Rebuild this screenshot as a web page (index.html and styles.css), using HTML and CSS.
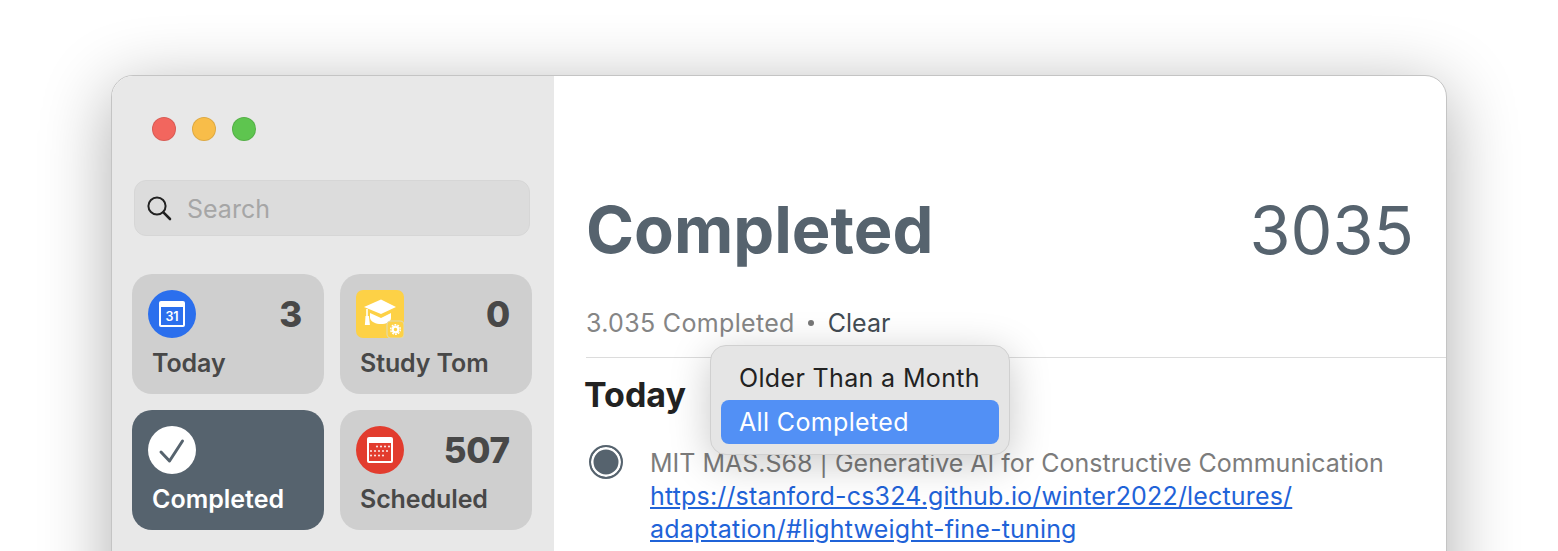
FILE: index.html
```html
<!DOCTYPE html>
<html lang="en">
<head>
<meta charset="utf-8">
<title>Reminders</title>
<link rel="stylesheet" href="styles.css">
</head>
<body>
<div class="window">
  <aside class="sidebar">
    <div class="lights">
      <span class="light red"></span><span class="light yellow"></span><span class="light green"></span>
    </div>
    <div class="search">
      <svg class="search-icon" viewBox="0 0 26 26" width="26" height="26"><circle cx="11" cy="11" r="8.6" fill="none" stroke="#222" stroke-width="2"/><path d="M17.4 17.4 L24 24" stroke="#222" stroke-width="2.6" stroke-linecap="round"/></svg>
      <span class="search-text">Search</span>
    </div>
    <div class="cards">
      <div class="card">
        <div class="card-top">
          <svg class="card-icon" viewBox="0 0 48 48" width="48" height="48"><circle cx="24" cy="24" r="24" fill="#2b6fed"/><rect x="11" y="11" width="26" height="26" rx="2" fill="#fff"/><rect x="13" y="17" width="22" height="18" fill="#2b6fed"/><text x="24" y="30.5" class="cal-num" text-anchor="middle">31</text></svg>
          <span class="count">3</span>
        </div>
        <div class="label">Today</div>
      </div>
      <div class="card">
        <div class="card-top">
          <svg class="card-icon" viewBox="0 0 48 48" width="48" height="48"><rect width="48" height="48" rx="7" fill="#fdd146"/><path d="M8 17 L25 9.5 L40 17 L25 24 Z" fill="#fff"/><path d="M14 23 L25 28 L35 23 V28 C35 32 30 34 25 34 C20 34 15 32 14 28 Z" fill="#fff"/><path d="M11 19 V26" stroke="#fff" stroke-width="1.6"/><path d="M9.5 26 h3.4 l1 9 h-5 Z" fill="#fff"/><rect x="31" y="31" width="17" height="17" rx="4" fill="#fdd146" stroke="#e2d9ac" stroke-width="1.2"/><circle cx="39.5" cy="39.5" r="2.8" fill="none" stroke="#fff" stroke-width="2.2"/><circle cx="39.5" cy="39.5" r="4.8" fill="none" stroke="#fff" stroke-width="1.4" stroke-dasharray="1.8 1.2"/></svg>
          <span class="count">0</span>
        </div>
        <div class="label">Study Tom</div>
      </div>
      <div class="card selected">
        <div class="card-top">
          <svg class="card-icon" viewBox="0 0 48 48" width="48" height="48"><circle cx="24" cy="24" r="24" fill="#fff"/><path d="M13 26 L21.5 35 L34.5 15" fill="none" stroke="#56636e" stroke-width="3" stroke-linecap="round" stroke-linejoin="round"/></svg>
        </div>
        <div class="label">Completed</div>
      </div>
      <div class="card">
        <div class="card-top">
          <svg class="card-icon" viewBox="0 0 48 48" width="48" height="48"><circle cx="24" cy="24" r="24" fill="#e23c2e"/><rect x="11" y="11" width="26" height="26" rx="2" fill="#fff"/><rect x="13" y="17" width="22" height="18" fill="#e23c2e"/><g fill="#fff" opacity=".85"><circle cx="21" cy="20.5" r="1.1"/><circle cx="25" cy="20.5" r="1.1"/><circle cx="29" cy="20.5" r="1.1"/><circle cx="33" cy="20.5" r="1.1"/><circle cx="15" cy="25" r="1.1"/><circle cx="19" cy="25" r="1.1"/><circle cx="23" cy="25" r="1.1"/><circle cx="27" cy="25" r="1.1"/><circle cx="31" cy="25" r="1.1"/><circle cx="15" cy="29.5" r="1.1"/><circle cx="19" cy="29.5" r="1.1"/><circle cx="23" cy="29.5" r="1.1"/><circle cx="27" cy="29.5" r="1.1"/></g></svg>
          <span class="count">507</span>
        </div>
        <div class="label">Scheduled</div>
      </div>
    </div>
  </aside>
  <main class="main">
    <header class="head">
      <h1 class="title">Completed</h1>
      <span class="total">3035</span>
    </header>
    <div class="sub">
      <span class="sub-count">3.035 Completed</span>
      <span class="dot"></span>
      <span class="clear">Clear</span>
    </div>
    <div class="divider"></div>
    <h2 class="section">Today</h2>
    <div class="item">
      <span class="radio"></span>
      <div class="item-text">
        <div class="item-title">MIT MAS.S68 | Generative AI for Constructive Communication</div>
        <a class="item-link" href="#">https://stanford-cs324.github.io/winter2022/lectures/<br>adaptation/#lightweight-fine-tuning</a>
      </div>
    </div>
    <div class="menu">
      <div class="menu-item">Older Than a Month</div>
      <div class="menu-item active">All Completed</div>
    </div>
  </main>
</div>
</body>
</html>
```
FILE: styles.css
```css
* { box-sizing: border-box; }
html, body { height: 551px; overflow: hidden; }
body {
  margin: 0;
  padding: 75px 111px 0 111px;
  background: #fff;
  font-family: Inter, "Liberation Sans", sans-serif;
}
.window {
  width: 1336px;
  height: 700px;
  display: grid;
  grid-template-columns: 442px 1fr;
  background: #fff;
  border: 1px solid #c4c4c4;
  border-radius: 22px;
  overflow: hidden;
  box-shadow: 0 14px 70px rgba(0, 0, 0, .32);
}
.sidebar {
  background: #e8e8e8;
  padding: 41px 20px 0 20px;
}
.lights { display: flex; gap: 16px; padding-left: 20px; }
.light { width: 24px; height: 24px; border-radius: 50%; border: 1px solid rgba(0, 0, 0, .1); }
.red { background: #f2665e; }
.yellow { background: #f8bd49; }
.green { background: #5ec54f; }
.search {
  margin: 39px 0 0 2px;
  width: 396px;
  height: 56px;
  display: flex;
  align-items: center;
  gap: 15px;
  padding: 0 11px;
  background: #dcdcdc;
  border: 1px solid #d6d6d6;
  border-radius: 12px;
}
.search-icon { flex: none; }
.search-text { font-size: 25px; line-height: 30px; padding-top: 2px; color: #a6a6a6; }
.cards {
  margin-top: 38px;
  display: grid;
  grid-template-columns: 192px 192px;
  grid-auto-rows: 120px;
  gap: 16px;
}
.card {
  background: #cfcfcf;
  border-radius: 20px;
  padding: 16px 22px 0 16px;
  color: #484848;
}
.card-top { display: flex; justify-content: space-between; height: 48px; }
.card-icon { display: block; flex: none; }
.count { font-size: 35px; font-weight: 800; line-height: 48px; letter-spacing: -.2px; }
.label { margin: 6px 0 0 4px; font-size: 25px; font-weight: 600; line-height: 38px; letter-spacing: -.1px; }
.selected { background: #56636e; color: #fff; }
.selected .label { letter-spacing: 0; }
.cal-num { font: 600 12.5px Inter, "Liberation Sans", sans-serif; fill: #fff; }
.main { position: relative; padding: 0 0 0 32px; }
.head {
  display: flex;
  justify-content: space-between;
  align-items: center;
  height: 80px;
  margin-top: 114px;
  padding-right: 32px;
  color: #56636e;
}
.title { margin: 0; font-size: 65px; font-weight: 700; line-height: 80px; }
.total { font-size: 66.5px; font-weight: 400; line-height: 80px; }
.sub { display: flex; align-items: center; height: 36px; margin-top: 35px; font-size: 25px; }
.sub-count { color: #858585; letter-spacing: .33px; }
.dot { width: 6px; height: 6px; margin: 0 14px 0 13px; border-radius: 50%; background: #777; }
.clear { color: #434c53; }
.divider { height: 1px; margin-top: 16px; background: #dcdcdc; }
.section { margin: 15px 0 0 -2px; font-size: 34px; font-weight: 700; line-height: 44px; color: #222; }
.item { display: flex; gap: 27px; margin-top: 30px; padding-left: 3px; }
.radio {
  flex: none;
  width: 34px;
  height: 34px;
  margin-top: -2px;
  border: 2.5px solid #56636e;
  border-radius: 50%;
  background: #56636e;
  box-shadow: inset 0 0 0 2.5px #fff;
}
.item-text { font-size: 25px; line-height: 33px; }
.item-title { color: #7c7c7c; }
.item-link { color: #1f63d8; text-decoration: underline; letter-spacing: .17px; }
.menu {
  position: absolute;
  left: 156px;
  top: 269px;
  width: 300px;
  height: 110px;
  padding: 10px;
  background: #e5e5e5;
  border: 1px solid #d0d0d0;
  border-radius: 16px;
  box-shadow: 0 8px 40px rgba(0, 0, 0, .22);
}
.menu-item {
  height: 44px;
  padding: 1px 0 0 18px;
  font-size: 25px;
  line-height: 43px;
  letter-spacing: .35px;
  color: #222;
  border-radius: 8px;
}
.active { background: #5290f5; color: #fff; }
```
